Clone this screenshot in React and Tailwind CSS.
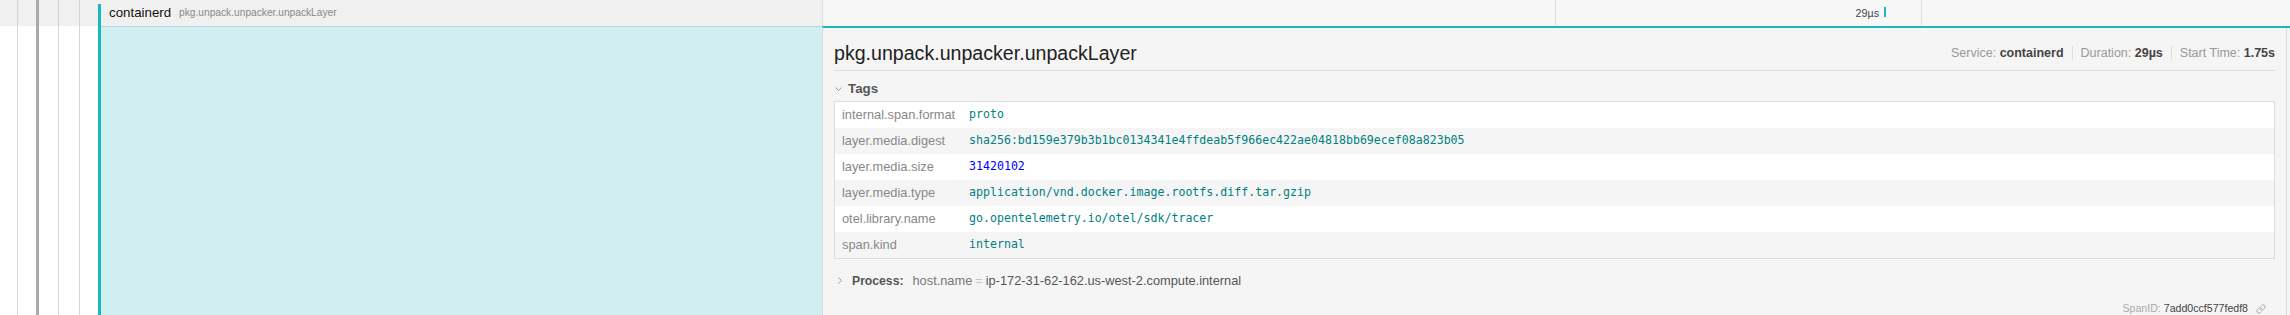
import React from 'react';
import { Link } from 'lucide-react';

const tags = [
  { key: 'internal.span.format', value: 'proto' },
  { key: 'layer.media.digest', value: 'sha256:bd159e379b3b1bc0134341e4ffdeab5f966ec422ae04818bb69ecef08a823b05' },
  { key: 'layer.media.size', value: '31420102', num: true },
  { key: 'layer.media.type', value: 'application/vnd.docker.image.rootfs.diff.tar.gzip' },
  { key: 'otel.library.name', value: 'go.opentelemetry.io/otel/sdk/tracer' },
  { key: 'span.kind', value: 'internal' },
];

// tree indent guides on the left of each row
const Gutter = () => (
  <div className="flex h-full shrink-0">
    <div className="w-[17px]" />
    <div className="w-px bg-[#d4d4d4]" />
    <div className="w-[18px]" />
    <div className="w-[3px] bg-[#aaaaaa]" />
    <div className="w-[19px]" />
    <div className="w-px bg-[#d4d4d4]" />
    <div className="w-[20px]" />
    <div className="w-px bg-[#d4d4d4]" />
    <div className="w-[18px]" />
  </div>
);

const App = () => {
  return (
    <div className="w-[2290px] h-[315px] overflow-hidden bg-white font-['Liberation_Sans',Arial,sans-serif]">
      {/* Span row */}
      <div className="flex h-[26px]">
        <div className="flex w-[822px] shrink-0 bg-[#f0f0f0]">
          <Gutter />
          <div className="w-[3px] mt-[4px] bg-[#17b8be]" />
          <div className="flex items-center pl-[8px]">
            <span className="text-[13.3px] text-[#111]">containerd</span>
            <span className="ml-[8px] text-[10.2px] text-[#888]">pkg.unpack.unpacker.unpackLayer</span>
          </div>
        </div>
        <div className="w-px bg-[#dddddd]" />
        <div className="relative flex-1 bg-[#f7f7f7]">
          <div className="absolute top-0 bottom-0 left-[732px] w-px bg-[#dddddd]" />
          <div className="absolute top-0 bottom-0 left-[1098px] w-px bg-[#dddddd]" />
          <span className="absolute top-[6px] right-[411px] text-[10.7px] leading-[14px] text-[#444]">29µs</span>
          <div className="absolute top-[7px] left-[1061px] h-[10px] w-[2px] bg-[#17b8be]" />
        </div>
      </div>

      {/* Detail row */}
      <div className="flex h-[289px]">
        <div className="flex w-[822px] shrink-0">
          <Gutter />
          <div className="w-[3px] bg-[#17b8be]" />
          <div className="flex-1 bg-[#d1eff1] border-t border-[#b6dbdf]" />
        </div>
        <div className="flex-1 bg-[#f5f5f5] border-l border-l-[#dddddd] border-t-2 border-t-[#17b8be]">
          <div className="mr-[3px] h-full border-r border-[#dddddd] px-[11px]">
            {/* Header */}
            <div className="flex items-center justify-between border-b border-[#dddddd] pt-[13px] pb-[5px]">
              <h2 className="text-[19.6px] leading-[24px] text-[#222]">pkg.unpack.unpacker.unpackLayer</h2>
              <div className="flex items-center text-[12.5px] text-[#999]">
                <span>Service: <strong className="font-bold text-[#444]">containerd</strong></span>
                <div className="mx-2 h-[14px] w-px bg-[#dddddd]" />
                <span>Duration: <strong className="font-bold text-[#444]">29µs</strong></span>
                <div className="mx-2 h-[14px] w-px bg-[#dddddd]" />
                <span>Start Time: <strong className="font-bold text-[#444]">1.75s</strong></span>
              </div>
            </div>

            {/* Tags */}
            <div className="mt-[9px] flex h-[18px] items-center">
              <svg width="10" height="10" viewBox="0 0 10 10" className="shrink-0">
                <polyline points="1.5,3.5 4.5,6.5 7.5,3.5" fill="none" stroke="#999" strokeWidth="1" />
              </svg>
              <span className="ml-[4px] text-[13.3px] font-bold text-[#555]">Tags</span>
            </div>
            <div className="mt-[3px] border border-[#dddddd]">
              {tags.map((t, i) => (
                <div key={t.key} className={`flex h-[26px] items-center ${i % 2 === 0 ? 'bg-white' : 'bg-[#f5f5f5]'}`}>
                  <div className="w-[134px] shrink-0 pl-[7px] text-[12.8px] text-[#888]">{t.key}</div>
                  <div className={`font-['DejaVu_Sans_Mono',monospace] text-[11.6px] ${t.num ? 'text-[#0000ff]' : 'text-[#008080]'}`}>
                    {t.value}
                  </div>
                </div>
              ))}
            </div>

            {/* Process */}
            <div className="mt-[13px] flex h-[18px] items-center">
              <svg width="10" height="10" viewBox="0 0 10 10" className="ml-[2px] shrink-0">
                <polyline points="2.5,1.5 5.5,4.5 2.5,7.5" fill="none" stroke="#999" strokeWidth="1" />
              </svg>
              <span className="ml-[6px] text-[12.2px] font-bold text-[#555]">Process:</span>
              <span className="ml-[9px] text-[12.8px] text-[#777]">host.name</span>
              <span className="px-[3px] text-[12.8px] text-[#c4c4c4]">=</span>
              <span className="text-[12.8px] text-[#555]">ip-172-31-62-162.us-west-2.compute.internal</span>
            </div>

            {/* Span ID */}
            <div className="mt-[12px] flex h-[14px] items-center justify-end pr-[9px] text-[10.6px]">
              <span className="text-[#aaa]">SpanID:</span>
              <span className="ml-[3px] text-[#444]">7add0ccf577fedf8</span>
              <Link className="ml-[8px] h-[10px] w-[10px] text-[#888]" strokeWidth={1.6} />
            </div>
          </div>
        </div>
      </div>
    </div>
  );
};

export default App;
